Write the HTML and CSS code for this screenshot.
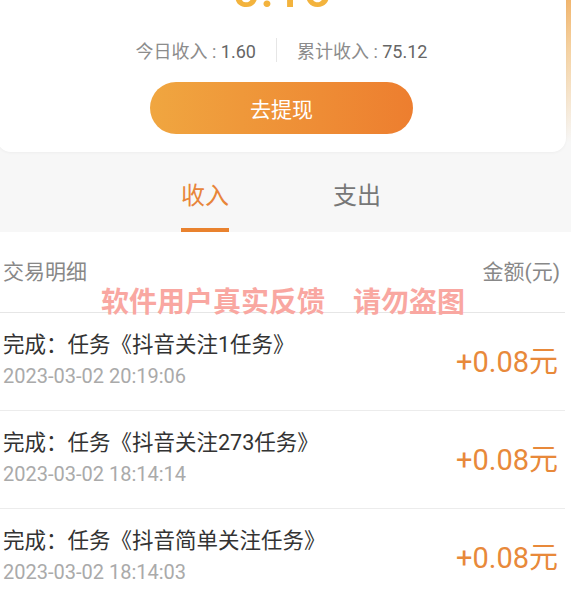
FILE: index.html
```html
<!DOCTYPE html>
<html lang="zh-CN">

<head>
    <meta charset="utf-8">
    <title>我的收入</title>
    <link rel="stylesheet" href="styles.css">
</head>

<body>
    <div class="header">
        <div class="card">
            <div class="balance">0.16</div>
            <div class="stats">
                <div class="stat">今日收入 : <span>1.60</span></div>
                <div class="divider"></div>
                <div class="stat">累计收入 : <span>75.12</span></div>
            </div>
            <button class="btn">去提现</button>
        </div>
    </div>

    <div class="tabs">
        <div class="tab active">
            <span>收入</span>
            <i></i>
        </div>
        <div class="tab">
            <span>支出</span>
            <i></i>
        </div>
    </div>

    <div class="list">
        <div class="list-head">
            <span>交易明细</span>
            <span>金额(元)</span>
        </div>
        <div class="item">
            <div class="info">
                <div class="title">完成：任务《抖音关注1任务》</div>
                <div class="time">2023-03-02 20:19:06</div>
            </div>
            <div class="amount">+0.08元</div>
        </div>
        <div class="item">
            <div class="info">
                <div class="title">完成：任务《抖音关注273任务》</div>
                <div class="time">2023-03-02 18:14:14</div>
            </div>
            <div class="amount">+0.08元</div>
        </div>
        <div class="item">
            <div class="info">
                <div class="title">完成：任务《抖音简单关注任务》</div>
                <div class="time">2023-03-02 18:14:03</div>
            </div>
            <div class="amount">+0.08元</div>
        </div>
    </div>

    <div class="watermark">软件用户真实反馈　请勿盗图</div>
</body>

</html>
```

FILE: styles.css
```css
body {
    margin: 0;
    background: #f7f7f7;
    font-family: Roboto, "Noto Sans CJK SC", sans-serif;
    overflow: hidden;
}

.header {
    margin-top: -35px;
    padding-right: 5px;
    background: linear-gradient(180deg, #efa24a 0%, #f5d2a2 45%, #f7f7f7 95%);
}

.card {
    display: flex;
    flex-direction: column;
    align-items: center;
    margin-left: -3px;
    padding-bottom: 18px;
    background: #fff;
    border-radius: 14px;
    box-shadow: 0 1px 3px #0000000a;
}

.balance {
    font-size: 50px;
    line-height: 50px;
    font-weight: 500;
    color: #f3b33d;
}

.stats {
    display: flex;
    align-items: center;
    gap: 20px;
    margin-top: 23px;
    height: 24px;
    font-size: 18px;
    color: #8c8c8c;

    & span {
        color: #666;
    }
}

.divider {
    width: 1px;
    height: 24px;
    background: #e6e6e6;
}

.btn {
    margin-top: 20px;
    width: 263px;
    height: 52px;
    border: none;
    border-radius: 26px;
    background: linear-gradient(90deg, #f0a640, #ed7e2f);
    color: #fff;
    font-family: "Noto Sans CJK SC", sans-serif;
    font-size: 21px;
    cursor: pointer;
}

.tabs {
    display: flex;
    justify-content: center;
    gap: 104px;
    padding: 32px 9px 0 0;
}

.tab {
    display: flex;
    flex-direction: column;
    align-items: center;
    font-size: 24px;
    line-height: 24px;
    color: #777;

    & i {
        width: 48px;
        height: 4px;
        margin-top: 20px;
    }
}

.tab.active {
    color: #e8853a;

    & i {
        background: #e9822e;
    }
}

.list {
    background: #fff;
    padding-right: 6px;
}

.list-head {
    display: flex;
    justify-content: space-between;
    padding: 26px 5px 26px 3px;
    font-size: 21px;
    line-height: 28px;
    color: #888;
    border-bottom: 1px solid #e6e6e6;
}

.item {
    display: flex;
    justify-content: space-between;
    align-items: center;
    padding: 19px 7px 24px 3px;
    border-bottom: 1px solid #ececec;
}

.title {
    font-size: 21.5px;
    line-height: 26px;
    color: #333;
}

.time {
    margin-top: 8px;
    font-size: 20px;
    line-height: 20px;
    color: #aaa;
}

.amount {
    font-size: 29px;
    color: #e8893a;
}

.watermark {
    position: absolute;
    top: 284px;
    left: 101px;
    font-family: "Noto Sans CJK SC", sans-serif;
    font-size: 28px;
    line-height: 32px;
    font-weight: bold;
    color: #f9a7a1;
    white-space: pre;
}
```
